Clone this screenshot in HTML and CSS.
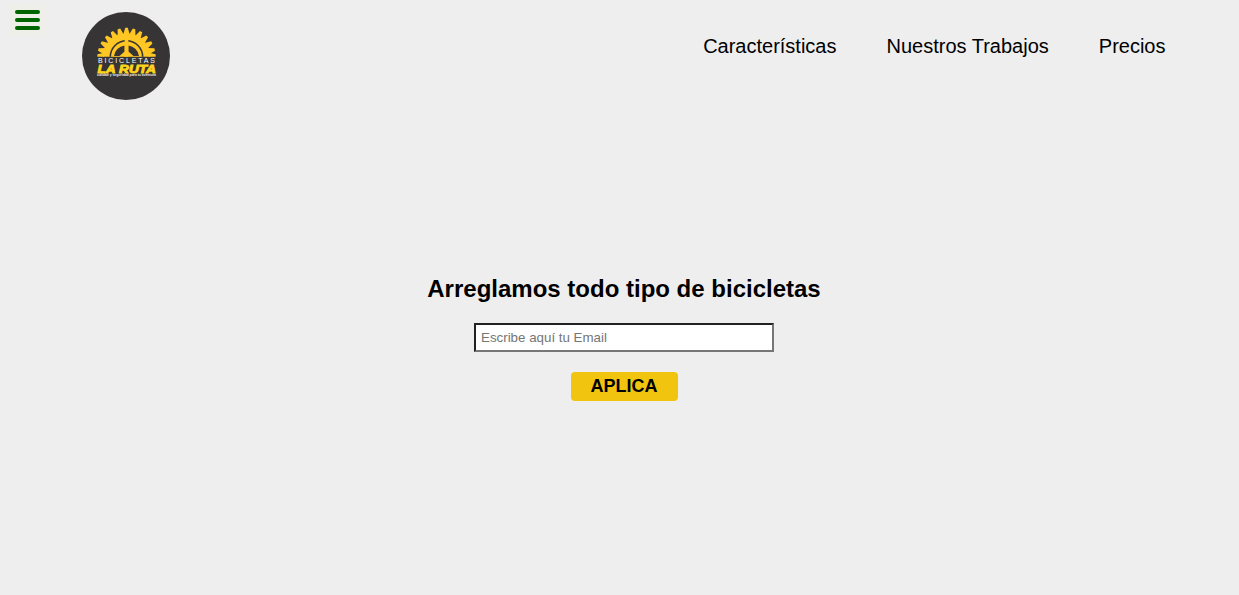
FILE: index.html
```html
<!DOCTYPE html>
<html lang="es">
<head>
<meta charset="utf-8">
<title>Bicicletas La Ruta</title>
<link rel="stylesheet" href="styles.css">
</head>
<body>
<button class="menu" aria-label="Menú"><span class="menu-bar"></span><span class="menu-bar"></span><span class="menu-bar"></span></button>
<header class="header">
  <svg class="logo" viewBox="0 0 88 88" role="img" aria-label="Bicicletas La Ruta">
    <defs>
      <clipPath id="upper"><rect x="10" y="10" width="70" height="34.8"/></clipPath>
      <path id="tooth" d="M41.3 22.5 43.2 15.8H45.8L47.7 22.5Z"/>
    </defs>
    <circle class="disc" cx="44" cy="44" r="44"/>
    <g clip-path="url(#upper)">
      <g class="gold">
        <circle cx="44.5" cy="45" r="23.6"/>
        <use href="#tooth"/>
        <use href="#tooth" transform="rotate(15 44.5 45)"/>
        <use href="#tooth" transform="rotate(30 44.5 45)"/>
        <use href="#tooth" transform="rotate(45 44.5 45)"/>
        <use href="#tooth" transform="rotate(60 44.5 45)"/>
        <use href="#tooth" transform="rotate(75 44.5 45)"/>
        <use href="#tooth" transform="rotate(87 44.5 45)"/>
        <use href="#tooth" transform="rotate(-15 44.5 45)"/>
        <use href="#tooth" transform="rotate(-30 44.5 45)"/>
        <use href="#tooth" transform="rotate(-45 44.5 45)"/>
        <use href="#tooth" transform="rotate(-60 44.5 45)"/>
        <use href="#tooth" transform="rotate(-75 44.5 45)"/>
        <use href="#tooth" transform="rotate(-87 44.5 45)"/>
      </g>
      <circle class="disc" cx="44.5" cy="45" r="17"/>
      <circle class="gold" cx="44.5" cy="45" r="15.4"/>
      <path class="disc" d="M32 44A12.5 12 0 0 1 42.6 33.4V39.5L37.5 44ZM57 44A12.5 12 0 0 0 46.4 33.4V39.5L51.5 44Z"/>
      <path class="gold" d="M42.7 45V27H46.3V45Z"/>
    </g>
    <text class="brand-top" x="16" y="51" textLength="57">BICICLETAS</text>
    <text class="brand-name" x="15.5" y="60.8" textLength="58.5" lengthAdjust="spacingAndGlyphs">LA RUTA</text>
    <text class="brand-tag" x="15" y="64.3" textLength="59" lengthAdjust="spacingAndGlyphs">calidad y seguridad para tu aventura</text>
  </svg>
  <nav class="nav">
    <a class="nav-link" href="#caracteristicas">Características</a>
    <a class="nav-link" href="#trabajos">Nuestros Trabajos</a>
    <a class="nav-link" href="#precios">Precios</a>
  </nav>
</header>
<main class="hero">
  <h2 class="title">Arreglamos todo tipo de bicicletas</h2>
  <form class="form">
    <input class="email" type="email" placeholder="Escribe aquí tu Email">
    <button class="submit" type="button">APLICA</button>
  </form>
</main>
</body>
</html>
```
FILE: styles.css
```css
* { box-sizing: border-box; }
body {
  margin: 0;
  min-height: 595px;
  background: #eee;
  color: #000;
  font-family: "Liberation Sans", Arial, sans-serif;
}
.menu {
  position: absolute;
  top: 5px;
  left: 10px;
  display: flex;
  flex-direction: column;
  gap: 4px;
  padding: 5px;
  border: 0;
  background: #efefea;
}
.menu-bar {
  width: 25px;
  height: 4px;
  border-radius: 2px;
  background: #006400;
}
.header {
  display: flex;
  justify-content: space-between;
  padding: 12px 73.5px 0 82px;
  height: 112px;
}
.logo { width: 88px; height: 88px; }
.disc { fill: #373435; }
.gold { fill: #fec724; }
.brand-top { fill: #fff; font-size: 7px; }
.brand-name { fill: #ffd51c; font-size: 10.6px; font-weight: 900; font-style: italic; stroke: #ffd51c; stroke-width: .8px; }
.brand-tag { fill: #eee; font-size: 3.4px; font-weight: 700; }
.nav { display: flex; gap: 50px; padding-top: 23px; }
.nav-link {
  color: #000;
  font-size: 20px;
  line-height: 23px;
  text-decoration: none;
}
.hero {
  display: flex;
  flex-direction: column;
  align-items: center;
  padding: 163px 0 0 9px;
}
.title { margin: 0 0 20px; font-size: 24px; line-height: 28px; }
.form { display: flex; flex-direction: column; align-items: center; gap: 20px; }
.email {
  width: 300px;
  height: 29px;
  padding: 5px;
  border: 2px inset #767676;
  background: #fff;
  font: 13.333px "Liberation Sans", Arial, sans-serif;
}
.email::placeholder { color: #757575; }
.submit {
  width: 107px;
  height: 29px;
  padding: 0;
  border: 0;
  border-radius: 4px;
  background: #f1c40f;
  color: #000;
  font: bold 18px "Liberation Sans", Arial, sans-serif;
}
```
